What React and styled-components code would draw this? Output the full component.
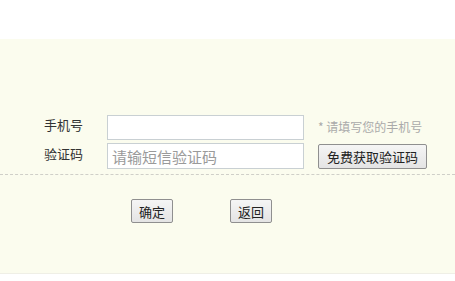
import React from "react";
import styled, { createGlobalStyle } from "styled-components";

const GlobalStyle = createGlobalStyle`
  body {
    margin: 0;
    background: #ffffff;
    font-family: "Noto Sans CJK SC", "Noto Sans", sans-serif;
  }
`;

const Page = styled.div`
  width: 455px;
  height: 281px;
  padding-top: 39px;
  box-sizing: border-box;
  overflow: hidden;
`;

const Panel = styled.div`
  height: 235px;
  background: #fbfcee;
  border-bottom: 1px solid #efefe6;
  padding-top: 76px;
  box-sizing: border-box;
`;

const FormGrid = styled.div`
  display: grid;
  grid-template-columns: 63px 197px auto;
  column-gap: 14px;
  row-gap: 3px;
  padding-left: 44px;
  align-items: center;
`;

const Label = styled.label`
  font-size: 13px;
  color: #333;
  grid-column: 1;
  line-height: 1;
  margin-bottom: 6px;
`;

const TextInput = styled.input`
  box-sizing: border-box;
  width: 197px;
  height: ${(p) => p.$h || 25}px;
  margin: 0;
  margin-left: -14px;
  padding: 0 4px;
  border: 1px solid #c9d0d3;
  background: #fff;
  font-family: inherit;
  font-size: 15px;
  color: #333;
  outline: none;
  &::placeholder {
    color: #9a9a9a;
  }
`;

const Hint = styled.span`
  font-size: 12px;
  color: #aaa;
  margin-left: -14px;
  margin-bottom: 2px;
`;

const Button = styled.button`
  box-sizing: border-box;
  height: ${(p) => p.$h || 24}px;
  padding: 0 ${(p) => p.$px || 7}px;
  border: 1px solid #8f8f8f;
  border-radius: 2px;
  background: linear-gradient(#f5f5f5, #e4e4e4);
  font-family: inherit;
  font-size: 13px;
  color: #222;
  cursor: pointer;
  justify-self: start;
`;

const CodeButton = styled(Button)`
  margin-left: -14px;
`;

const Divider = styled.div`
  margin-top: 5px;
  border-top: 1px dashed #cfcfc8;
`;

const Actions = styled.div`
  display: flex;
  gap: 57px;
  padding-left: 131px;
  margin-top: 24px;
`;

export default function App() {
  return (
    <>
      <GlobalStyle />
      <Page>
        <Panel>
          <FormGrid>
            <Label>手机号</Label>
            <TextInput type="text" />
            <Hint>* 请填写您的手机号</Hint>
            <Label>验证码</Label>
            <TextInput type="text" $h={26} placeholder="请输短信验证码" />
            <CodeButton $h={25} $px={8}>免费获取验证码</CodeButton>
          </FormGrid>
          <Divider />
          <Actions>
            <Button>确定</Button>
            <Button>返回</Button>
          </Actions>
        </Panel>
      </Page>
    </>
  );
}
